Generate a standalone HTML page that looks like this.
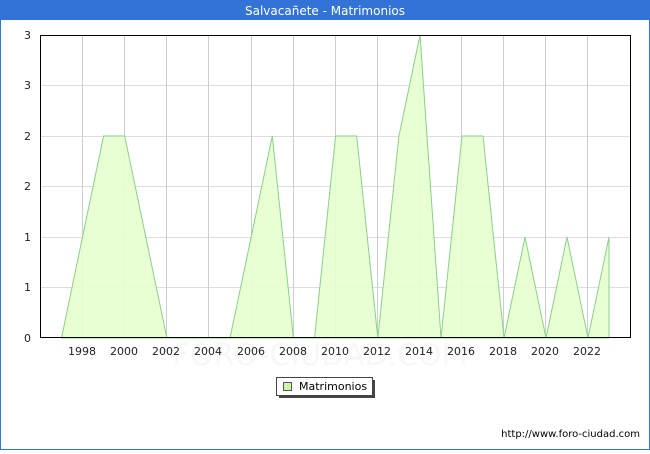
<!DOCTYPE html>
<html><head><meta charset="utf-8"><style>
body{margin:0;width:650px;height:450px;overflow:hidden;background:#fff;font-family:"DejaVu Sans","Liberation Sans",sans-serif}
</style></head><body>
<svg width="650" height="450" xmlns="http://www.w3.org/2000/svg" font-family="DejaVu Sans, Liberation Sans, sans-serif">
<rect x="0.5" y="0.5" width="649" height="449" fill="#fff" stroke="#3373d6"/>
<rect x="0" y="0" width="650" height="20" fill="#3373d6"/>
<text x="325" y="15" font-size="12" fill="#fff" text-anchor="middle">Salvacañete - Matrimonios</text>
<g stroke="#ddd" stroke-width="1">
<line x1="40" y1="287.5" x2="631" y2="287.5"/><line x1="40" y1="237.5" x2="631" y2="237.5"/><line x1="40" y1="186.5" x2="631" y2="186.5"/><line x1="40" y1="136.5" x2="631" y2="136.5"/><line x1="40" y1="85.5" x2="631" y2="85.5"/>
</g>
<g stroke="#ccc" stroke-width="1">
<line x1="82.5" y1="35" x2="82.5" y2="338"/><line x1="124.5" y1="35" x2="124.5" y2="338"/><line x1="166.5" y1="35" x2="166.5" y2="338"/><line x1="208.5" y1="35" x2="208.5" y2="338"/><line x1="251.5" y1="35" x2="251.5" y2="338"/><line x1="293.5" y1="35" x2="293.5" y2="338"/><line x1="335.5" y1="35" x2="335.5" y2="338"/><line x1="377.5" y1="35" x2="377.5" y2="338"/><line x1="419.5" y1="35" x2="419.5" y2="338"/><line x1="461.5" y1="35" x2="461.5" y2="338"/><line x1="503.5" y1="35" x2="503.5" y2="338"/><line x1="545.5" y1="35" x2="545.5" y2="338"/><line x1="587.5" y1="35" x2="587.5" y2="338"/>
</g>
<polygon fill="#e5ffcf" fill-opacity="0.9" stroke="#8ad08a" stroke-width="1" points="61.5,338 82.5,237 103.6,136 124.7,136 145.8,237 166.9,338 188,338 209,338 230,338 251.2,237 272.3,136 293.4,338 314.5,338 335.6,136 356.7,136 377.8,338 398.9,136 420,35 441,338 462,136 483,136 504,338 525,237 546,338 567,237 588,338 609,237 609,338"/>
<text x="320" y="365" font-size="30" fill="#000" fill-opacity="0.03" text-anchor="middle">FORO-CIUDAD.COM</text>
<rect x="40.5" y="35.5" width="590" height="302" fill="none" stroke="#000"/>
<g font-size="11" fill="#222" text-anchor="end">
<text x="31" y="342">0</text><text x="31" y="291">1</text><text x="31" y="241">1</text><text x="31" y="190">2</text><text x="31" y="140">2</text><text x="31" y="89">3</text><text x="31" y="39">3</text>
</g>
<g font-size="11" fill="#222" text-anchor="middle">
<text x="82" y="355">1998</text><text x="124" y="355">2000</text><text x="166" y="355">2002</text><text x="208" y="355">2004</text><text x="251" y="355">2006</text><text x="293" y="355">2008</text><text x="335" y="355">2010</text><text x="377" y="355">2012</text><text x="419" y="355">2014</text><text x="461" y="355">2016</text><text x="503" y="355">2018</text><text x="545" y="355">2020</text><text x="587" y="355">2022</text>
</g>
<rect x="279" y="380" width="96" height="18" fill="#444"/>
<rect x="276.5" y="377.5" width="96" height="18" fill="#fff" stroke="#444"/>
<rect x="283.5" y="382.5" width="8" height="8" fill="#ccf5a8" stroke="#555"/>
<text x="299" y="390" font-size="11" fill="#000">Matrimonios</text>
<text x="640" y="437" font-size="10" fill="#000" text-anchor="end">http://www.foro-ciudad.com</text>
</svg>
</body></html>
